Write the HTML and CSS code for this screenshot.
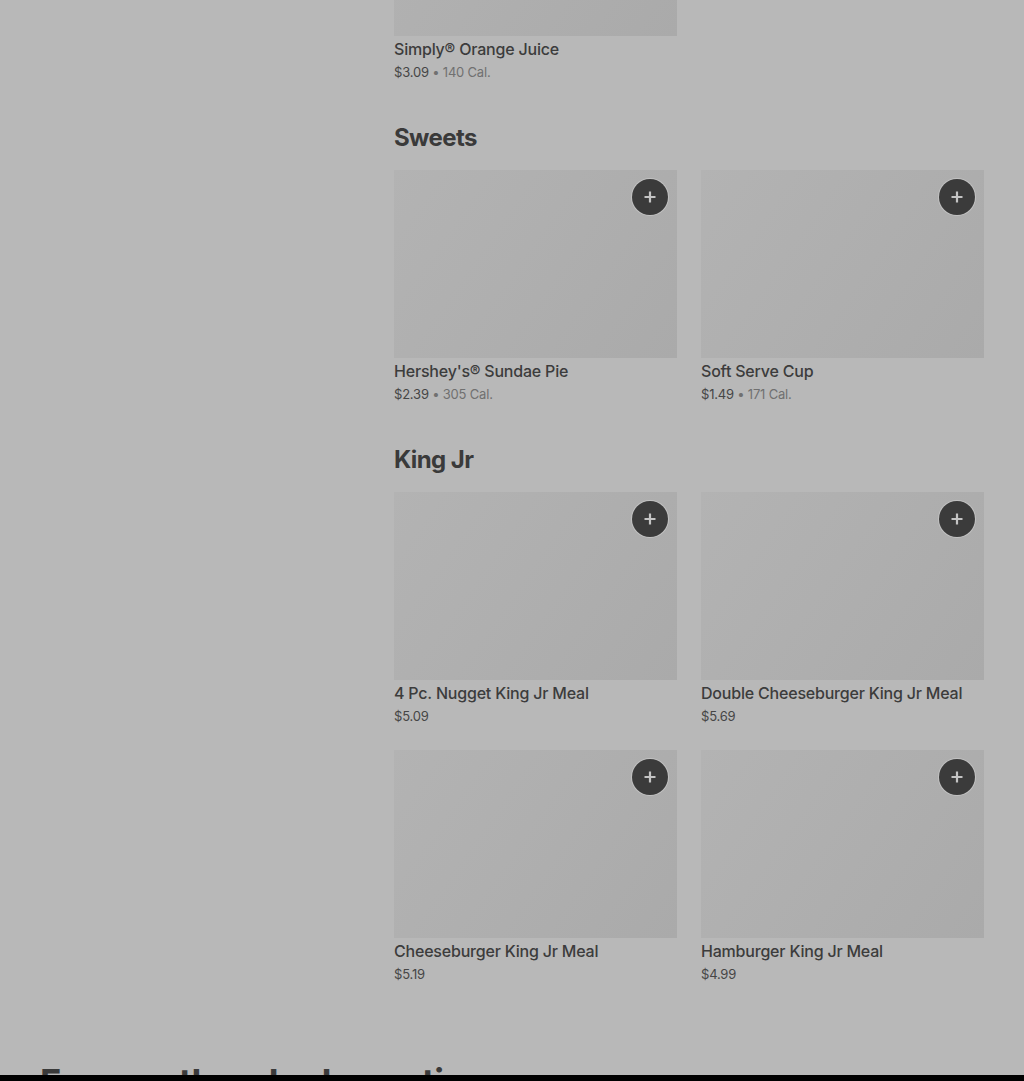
FILE: index.html
```html
<!DOCTYPE html>
<html lang="en">
<head>
<meta charset="utf-8">
<title>Menu</title>
<link rel="stylesheet" href="styles.css">
</head>
<body>
<div class="page">
  <div class="layout">
    <aside class="sidebar"></aside>
    <main class="menu">
      <section class="section section-first">
        <div class="grid">
          <div class="item">
            <div class="thumb"></div>
            <div class="name">Simply® Orange Juice</div>
            <div class="price">$3.09<span class="cal"> • 140 Cal.</span></div>
          </div>
        </div>
      </section>

      <section class="section">
        <h2 class="section-title">Sweets</h2>
        <div class="grid">
          <div class="item">
            <div class="thumb"><button class="add" aria-label="Add"><svg viewBox="0 0 12 12" width="12" height="12"><path d="M6 0.5v11M0.5 6h11" stroke="currentColor" stroke-width="2.2"/></svg></button></div>
            <div class="name">Hershey's® Sundae Pie</div>
            <div class="price">$2.39<span class="cal"> • 305 Cal.</span></div>
          </div>
          <div class="item">
            <div class="thumb"><button class="add" aria-label="Add"><svg viewBox="0 0 12 12" width="12" height="12"><path d="M6 0.5v11M0.5 6h11" stroke="currentColor" stroke-width="2.2"/></svg></button></div>
            <div class="name">Soft Serve Cup</div>
            <div class="price">$1.49<span class="cal"> • 171 Cal.</span></div>
          </div>
        </div>
      </section>

      <section class="section">
        <h2 class="section-title">King Jr</h2>
        <div class="grid">
          <div class="item">
            <div class="thumb"><button class="add" aria-label="Add"><svg viewBox="0 0 12 12" width="12" height="12"><path d="M6 0.5v11M0.5 6h11" stroke="currentColor" stroke-width="2.2"/></svg></button></div>
            <div class="name">4 Pc. Nugget King Jr Meal</div>
            <div class="price">$5.09</div>
          </div>
          <div class="item">
            <div class="thumb"><button class="add" aria-label="Add"><svg viewBox="0 0 12 12" width="12" height="12"><path d="M6 0.5v11M0.5 6h11" stroke="currentColor" stroke-width="2.2"/></svg></button></div>
            <div class="name">Double Cheeseburger King Jr Meal</div>
            <div class="price">$5.69</div>
          </div>
          <div class="item">
            <div class="thumb"><button class="add" aria-label="Add"><svg viewBox="0 0 12 12" width="12" height="12"><path d="M6 0.5v11M0.5 6h11" stroke="currentColor" stroke-width="2.2"/></svg></button></div>
            <div class="name">Cheeseburger King Jr Meal</div>
            <div class="price">$5.19</div>
          </div>
          <div class="item">
            <div class="thumb"><button class="add" aria-label="Add"><svg viewBox="0 0 12 12" width="12" height="12"><path d="M6 0.5v11M0.5 6h11" stroke="currentColor" stroke-width="2.2"/></svg></button></div>
            <div class="name">Hamburger King Jr Meal</div>
            <div class="price">$4.99</div>
          </div>
        </div>
      </section>
    </main>
  </div>
  <section class="faq">
    <h2 class="faq-title">Frequently asked questions</h2>
  </section>
</div>
<div class="bottom-bar"></div>
</body>
</html>
```

FILE: styles.css
```css
html, body {
  margin: 0;
  padding: 0;
  background: #b8b8b8;
  font-family: Inter, "Noto Sans", sans-serif;
  color: #3c3c3c;
  overflow: hidden;
}

.page {
  padding: 0 40px;
  margin-top: -152px;
}

.layout {
  display: grid;
  grid-template-columns: 330px 1fr;
  column-gap: 24px;
}

.section {
  padding-bottom: 39px;
}

.section-title {
  margin: 0 0 16px;
  padding-top: 1px;
  font-size: 24px;
  line-height: 32px;
  font-weight: 700;
  letter-spacing: -0.6px;
  color: #3a3a3a;
}

.grid {
  display: grid;
  grid-template-columns: 1fr 1fr;
  gap: 24px;
}

.thumb {
  position: relative;
  height: 188px;
  background: linear-gradient(125deg, #b3b3b3 0%, #afafaf 45%, #aaaaaa 100%);
}

.add {
  position: absolute;
  top: 9px;
  right: 9px;
  width: 36px;
  height: 36px;
  border: none;
  border-radius: 50%;
  padding: 0;
  background: #3b3b3b;
  color: #c4c4c4;
  display: flex;
  align-items: center;
  justify-content: center;
  box-shadow: 0 0 0 1px #c2c2c2;
}

.name {
  margin-top: 3px;
  font-size: 16px;
  line-height: 20px;
  font-weight: 500;
  color: #3c3c3c;
  letter-spacing: -0.2px;
}

.price {
  margin-top: 3px;
  font-size: 13px;
  line-height: 20px;
  color: #464646;
  letter-spacing: -0.2px;
}

.cal {
  color: #707070;
}

.faq {
  padding-top: 37px;
}

.faq-title {
  margin: 0;
  font-size: 36px;
  line-height: 44px;
  font-weight: 700;
  letter-spacing: -0.8px;
  color: #3a3a3a;
}

.bottom-bar {
  position: fixed;
  left: 0;
  right: 0;
  bottom: 0;
  height: 6px;
  background: #000;
}
```
